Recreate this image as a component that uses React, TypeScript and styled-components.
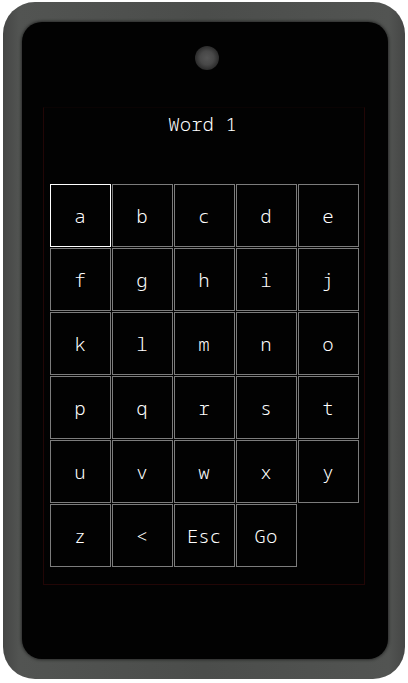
import React from "react";
import styled, { createGlobalStyle } from "styled-components";

const Global = createGlobalStyle`
  html, body { margin: 0; padding: 0; background: #ffffff; }
  body { width: 408px; height: 683px; overflow: hidden; }
`;

const Page = styled.div`
  width: 408px;
  height: 683px;
  padding: 2px 3px 4px 3px;
  box-sizing: border-box;
`;

const Phone = styled.div`
  width: 402px;
  height: 677px;
  box-sizing: border-box;
  border-radius: 32px;
  padding: 20px 17px 20px 19px;
  background: linear-gradient(90deg, #454645 0%, #525452 4%, #4b4d4b 50%, #525452 96%, #454645 100%);
  display: flex;
`;

const Screen = styled.div`
  flex: 1;
  background: #020202;
  border-radius: 20px;
  box-shadow: 0 0 3px 1px #2a2b2a;
  display: flex;
  flex-direction: column;
  align-items: center;
  padding-top: 24px;
`;

const Camera = styled.div`
  width: 24px;
  height: 24px;
  border-radius: 50%;
  margin-left: 4px;
  background: radial-gradient(circle at 50% 50%, #555555 0%, #484848 40%, #2a2a2a 72%, #050505 100%);
`;

const Panel = styled.div`
  margin-top: 37px;
  margin-left: -2px;
  width: 322px;
  height: 478px;
  box-sizing: border-box;
  border: 1px solid #220606;
  border-top-color: #0a0303;
  display: flex;
  flex-direction: column;
  align-items: center;
  padding: 0 6px;
`;

const Title = styled.div`
  font-family: "Noto Sans Mono", "DejaVu Sans Mono", monospace;
  font-weight: 300;
  font-size: 19px;
  line-height: 24px;
  color: #ffffff;
  margin-top: 4px;
  height: 24px;
  margin-left: -3px;
`;

const Grid = styled.div`
  margin-top: 48px;
  display: grid;
  grid-template-columns: repeat(5, 61px);
  grid-auto-rows: 63px;
  gap: 1px;
`;

const Key = styled.div<{ $active?: boolean }>`
  box-sizing: border-box;
  border: 1px solid ${(p) => (p.$active ? "#ffffff" : "#7c7c7c")};
  display: flex;
  align-items: center;
  justify-content: center;
  font-family: "Noto Sans Mono", "DejaVu Sans Mono", monospace;
  font-weight: 300;
  font-size: 19px;
  color: #ffffff;
`;

const keys = [
  "a", "b", "c", "d", "e",
  "f", "g", "h", "i", "j",
  "k", "l", "m", "n", "o",
  "p", "q", "r", "s", "t",
  "u", "v", "w", "x", "y",
  "z", "<", "Esc", "Go",
];

export default function App() {
  return (
    <>
      <Global />
      <Page>
        <Phone>
          <Screen>
            <Camera />
            <Panel>
              <Title>Word 1</Title>
              <Grid>
                {keys.map((k, i) => (
                  <Key key={k} $active={i === 0}>
                    {k}
                  </Key>
                ))}
              </Grid>
            </Panel>
          </Screen>
        </Phone>
      </Page>
    </>
  );
}
